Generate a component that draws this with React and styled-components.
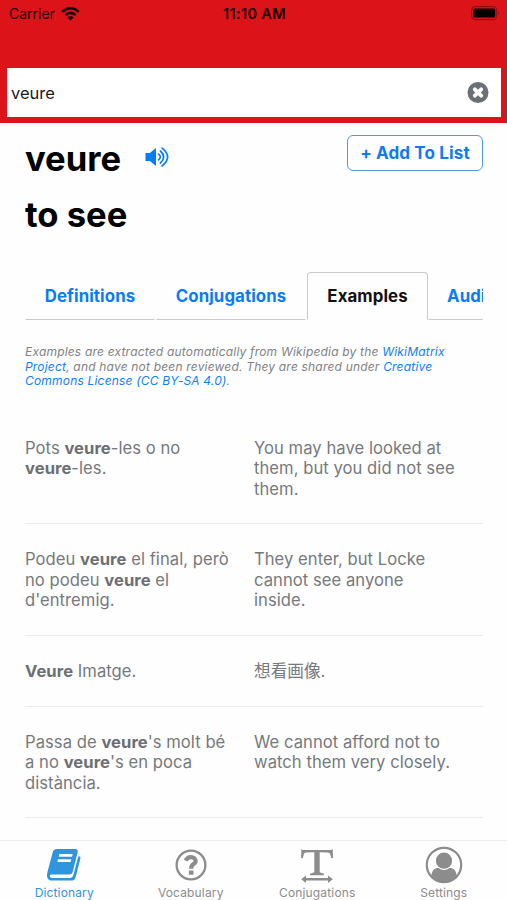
import React from 'react';
import styled, { createGlobalStyle } from 'styled-components';

const GlobalStyle = createGlobalStyle`
  * { box-sizing: border-box; }
  html, body { margin: 0; padding: 0; background: #fefefe; }
  body { font-family: Inter, "Noto Sans CJK JP", sans-serif; }
`;

const Screen = styled.div`
  width: 507px;
  height: 900px;
  display: flex;
  flex-direction: column;
  overflow: hidden;
  background: #fefefe;
`;

const Header = styled.header`
  flex: none;
  height: 123px;
  background: #dc1318;
`;

const StatusBar = styled.div`
  height: 68px;
  padding: 5px 7px 0 9px;
  display: grid;
  grid-template-columns: 1fr auto 1fr;
  align-items: start;
  color: #1c0203;
  font-size: 14px;
  line-height: 18px;
`;

const Carrier = styled.div`
  display: flex;
  align-items: center;
  gap: 6px;
`;

const Clock = styled.div`
  font-weight: 600;
  font-size: 14.5px;
  letter-spacing: 0.35px;
`;

const BatterySlot = styled.div`
  display: flex;
  justify-content: flex-end;
`;

const SearchField = styled.div`
  height: 49px;
  margin: 0 6px 0 7px;
  padding: 0 12px 0 4px;
  display: flex;
  align-items: center;
  justify-content: space-between;
  background: #fff;
  color: #1b1b1b;
  font-size: 16.5px;
`;

const Content = styled.main`
  flex: 1;
  min-height: 0;
  overflow: hidden;
  padding: 12px 24px 0 25px;
`;

const TitleRow = styled.div`
  display: flex;
  align-items: flex-start;
  height: 51px;
`;

const Heading = styled.h1`
  margin: 0;
  color: #000;
  font-size: 34.6px;
  font-weight: 700;
  line-height: 46px;
`;

const SpeakerButton = styled.button`
  margin: 12px 0 0 24px;
  padding: 0;
  border: 0;
  background: none;
  display: flex;
`;

const AddButton = styled.button`
  margin-left: auto;
  width: 136px;
  height: 36px;
  padding: 0;
  border: 1px solid #4a9be0;
  border-radius: 6px;
  background: #fefefe;
  color: #0f7bf2;
  font: 700 17px/34px Inter, sans-serif;
  letter-spacing: 0.15px;
  white-space: nowrap;
`;

const Translation = styled(Heading)`
  height: 86px;
  line-height: 57px;
`;

const Tabs = styled.nav`
  display: flex;
  width: 458px;
  height: 48px;
  gap: 1px;
  overflow: hidden;
`;

const Tab = styled.div`
  flex: none;
  width: ${(p) => p.$width}px;
  text-align: ${(p) => (p.$clipped ? 'left' : 'center')};
  padding-left: ${(p) => (p.$clipped ? '18px' : '0')};
  border: 1px solid transparent;
  border-bottom-color: #c9cacc;
  color: #087cf5;
  font-size: 16.8px;
  font-weight: 700;
  line-height: 46px;
  letter-spacing: 0.1px;
  ${(p) => p.$active && `
    margin-right: -1px;
    color: #111;
    border-color: #c9cacc;
    border-bottom-color: transparent;
    border-radius: 4px 4px 0 0;
  `}
`;

const Note = styled.p`
  margin: 25px 0 0;
  height: 67.5px;
  color: #808285;
  font-size: 12px;
  font-style: italic;
  line-height: 14.6px;
  white-space: nowrap;
  letter-spacing: 0.19px;
`;

const Link = styled.a`
  color: #0f80f4;
`;

const ExampleRow = styled.div`
  display: grid;
  grid-template-columns: 204px 229px;
  column-gap: 25px;
  padding: 25px 0 24.2px;
  border-bottom: 1px solid #ebebec;
  color: #75797d;
  font-size: 16.6px;
  line-height: 20.5px;
  letter-spacing: 0.05px;
  white-space: nowrap;
  b { font-weight: 700; color: #6b6f73; }
`;

const TabBar = styled.footer`
  flex: none;
  height: 60px;
  padding-left: 1px;
  border-top: 1px solid #ececec;
  display: grid;
  grid-template-columns: repeat(4, 1fr);
  background: #fefefe;
`;

const BarItem = styled.div`
  display: flex;
  flex-direction: column;
  align-items: center;
  padding-top: 5px;
  color: ${(p) => (p.$active ? '#2f95dc' : '#8c8c8c')};
  font-size: 12px;
  line-height: 16px;
  letter-spacing: 0.15px;
  svg { display: block; margin-bottom: 1px; }
`;

const Wifi = () => (
  <svg width="19" height="14" viewBox="0 0 19 14" fill="none" stroke="#1c0203" strokeWidth="2.6">
    <path d="M1.3 4.9 Q9.5 -2.5 17.7 4.9" />
    <path d="M4.4 8.1 Q9.5 3.7 14.6 8.1" />
    <path d="M9.5 13.4 L6.5 10.4 Q9.5 7.8 12.5 10.4 Z" fill="#1c0203" stroke="none" />
  </svg>
);

const Battery = () => (
  <svg width="29" height="16" viewBox="0 0 29 16">
    <rect x="0.7" y="1.6" width="25" height="13" rx="3.2" fill="none" stroke="#8b0c10" strokeWidth="1" />
    <rect x="2.2" y="3.4" width="22" height="9.2" rx="1.6" fill="#080001" />
    <path d="M27 6 Q28.8 8 27 10 Z" fill="#8b0c10" />
  </svg>
);

const Clear = () => (
  <svg width="22" height="22" viewBox="0 0 22 22">
    <circle cx="11" cy="10.5" r="10.5" fill="#6a7075" />
    <path d="M7.8 7.3 L14.2 13.7 M14.2 7.3 L7.8 13.7" stroke="#fff" strokeWidth="3.8" strokeLinecap="round" />
  </svg>
);

const Speaker = () => (
  <svg width="25" height="20" viewBox="0 0 25 20" fill="none" stroke="#087cf5" strokeWidth="1.7" strokeLinecap="round">
    <path d="M0.5 6 H4.8 L11 0.9 V19 L4.8 14 H0.5 Z" fill="#087cf5" stroke="none" />
    <path d="M13.6 7.2 Q17 10 13.6 12.8" />
    <path d="M15.4 4 Q22 10 15.4 16" />
    <path d="M17.2 1.1 Q28 10 17.2 18.9" />
  </svg>
);

const BookIcon = () => (
  <svg width="38" height="38" viewBox="0 0 38 38">
    <path fill="currentColor" fillRule="evenodd" d="M12 3 H30 Q33.4 3 32.6 6.4 L27.6 26.2 Q27 28.6 24.4 28.6 H6.9 Q4.7 28.6 4.7 30 Q4.7 31.9 7.2 31.9 H25.2 Q27.6 31.9 28.3 29.3 L33.3 10.4 Q35.9 9.6 35.4 12.4 L30.6 31.2 Q29.7 34.6 26.5 34.6 H6.9 Q3.2 34.6 2.2 31.2 Q1.8 28.6 2.4 26.2 L7.8 6 Q8.7 3 12 3 Z M14.4 8 L13.7 10.8 H27 L27.7 8 Z M13 13.2 L12.3 16 H25.6 L26.3 13.2 Z" />
  </svg>
);

const QuestionIcon = () => (
  <svg width="38" height="38" viewBox="0 0 38 38">
    <circle cx="19" cy="19" r="14.4" fill="none" stroke="currentColor" strokeWidth="2.3" />
    <path d="M13.6 14.7 C15.2 11.4 17.6 10.8 20 11.2 C23.8 12 24.8 15.8 22 17.7 C20.2 18.9 19.2 19.4 19.2 22.7" fill="none" stroke="currentColor" strokeWidth="4.2" />
    <rect x="16.9" y="24.4" width="4.6" height="4.3" rx="0.5" fill="currentColor" />
  </svg>
);

const TextWidthIcon = () => (
  <svg width="38" height="38" viewBox="0 0 38 38" fill="currentColor">
    <path d="M3.4 3 L4.8 4 H33.2 L34.7 3 L35 12 L33.4 12.2 L32 7.7 Q31.6 6.5 30 6.4 L21.7 6.2 V26.3 L25.9 27.8 V29.3 H12 V27.8 L16.3 26.3 V6.2 L8 6.4 Q6.4 6.5 6 7.7 L4.8 12.2 L3.1 12 Z" />
    <path d="M3.2 33.2 L8 29.4 V31.9 H30 V29.4 L34.8 33.2 L30 37 V34.5 H8 V37 Z" />
  </svg>
);

const PersonIcon = () => (
  <svg width="38" height="38" viewBox="0 0 38 38">
    <circle cx="19" cy="19" r="17.2" fill="none" stroke="currentColor" strokeWidth="2.2" />
    <circle cx="19" cy="14.7" r="8.1" fill="currentColor" />
    <path d="M6.2 29.8 Q7 22.3 13 21.8 Q19 26.2 25 21.8 Q31 22.3 31.8 29.8 Q26.5 36.2 19 36.2 Q11.5 36.2 6.2 29.8 Z" fill="currentColor" />
  </svg>
);

const examples = [
  [<>Pots <b>veure</b>-les o no<br /><b>veure</b>-les.</>, <>You may have looked at<br />them, but you did not see<br />them.</>],
  [<>Podeu <b>veure</b> el final, però<br />no podeu <b>veure</b> el<br />d'entremig.</>, <>They enter, but Locke<br />cannot see anyone<br />inside.</>],
  [<><b>Veure</b> Imatge.</>, <>想看画像.</>],
  [<>Passa de <b>veure</b>'s molt bé<br />a no <b>veure</b>'s en poca<br />distància.</>, <>We cannot afford not to<br />watch them very closely.</>],
];

export default function App() {
  return (
    <Screen>
      <GlobalStyle />
      <Header>
        <StatusBar>
          <Carrier>Carrier <Wifi /></Carrier>
          <Clock>11:10 AM</Clock>
          <BatterySlot><Battery /></BatterySlot>
        </StatusBar>
        <SearchField>veure<Clear /></SearchField>
      </Header>
      <Content>
        <TitleRow>
          <Heading>veure</Heading>
          <SpeakerButton aria-label="Listen"><Speaker /></SpeakerButton>
          <AddButton>+ Add To List</AddButton>
        </TitleRow>
        <Translation as="h2">to see</Translation>
        <Tabs>
          <Tab $width={130}>Definitions</Tab>
          <Tab $width={150}>Conjugations</Tab>
          <Tab $width={121} $active>Examples</Tab>
          <Tab $width={90} $clipped>Audio</Tab>
        </Tabs>
        <Note>
          Examples are extracted automatically from Wikipedia by the <Link>WikiMatrix</Link><br />
          <Link>Project</Link>, and have not been reviewed. They are shared under <Link>Creative</Link><br />
          <Link>Commons License (CC BY-SA 4.0)</Link>.
        </Note>
        {examples.map(([source, target], i) => (
          <ExampleRow key={i}><div>{source}</div><div>{target}</div></ExampleRow>
        ))}
      </Content>
      <TabBar>
        <BarItem $active><BookIcon />Dictionary</BarItem>
        <BarItem><QuestionIcon />Vocabulary</BarItem>
        <BarItem><TextWidthIcon />Conjugations</BarItem>
        <BarItem><PersonIcon />Settings</BarItem>
      </TabBar>
    </Screen>
  );
}
